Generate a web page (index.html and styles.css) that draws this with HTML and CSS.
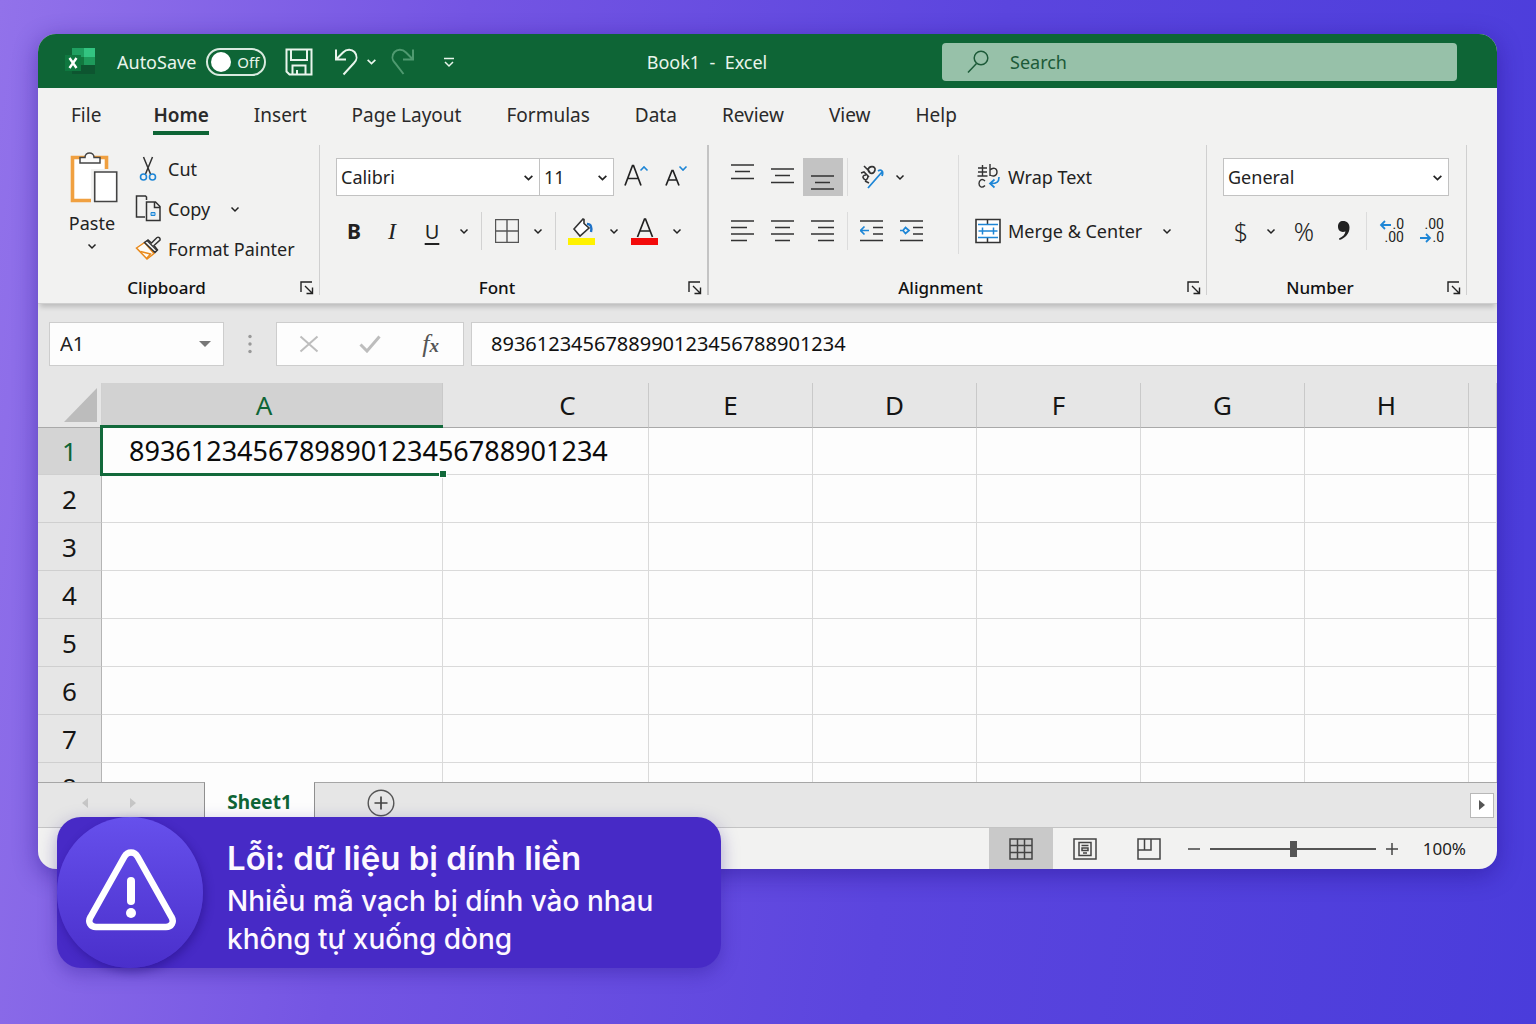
FILE: index.html
```html
<!DOCTYPE html>
<html lang="vi">
<head>
<meta charset="utf-8">
<title>Book1 - Excel</title>
<link rel="stylesheet" href="styles.css">
</head>
<body>
<svg width="0" height="0" class="defs" aria-hidden="true">
  <symbol id="chev" viewBox="0 0 10 10"><path d="M1.500 3.500L5 7l3.500-3.500" fill="none" stroke="currentColor" stroke-width="1.500"/></symbol>
  <symbol id="launch" viewBox="0 0 14 14"><path d="M1 11V1h11M5 5l7 7M12.500 6.500v6h-6" fill="none" stroke="currentColor" stroke-width="1.400"/></symbol>
</svg>
<main class="window">
  <header class="titlebar">
    <div class="quick">
      <svg class="logo" viewBox="0 0 32 30" width="32" height="30"><path d="M8 1h12v9H8z" fill="#1fa061"/><path d="M20 1h11v9H20z" fill="#33c481"/><path d="M8 10h12v8H8z" fill="#12783f"/><path d="M20 10h11v8H20z" fill="#1e9a5b"/><path d="M8 18h23v9H8z" fill="#0d5530"/><path d="M1 8h16v16H1z" fill="#0f7840"/><path d="M5.500 11l7 10M12.500 11l-7 10" stroke="#fff" stroke-width="2.400"/></svg>
      <label class="autosave"><span>AutoSave</span><span class="switch"><input type="checkbox"><span>Off</span></span></label>
      <button class="tb save" aria-label="Save"><svg width="28" height="28" viewBox="0 0 28 28"><path d="M1.500 1.500h25v25h-22l-3-3zM6 1.500v10.500h16V1.500M7.500 26V17.500h13V26M12 26v-4" fill="none" stroke="currentColor" stroke-width="2"/></svg></button>
      <button class="tb undo" aria-label="Undo"><svg width="26" height="28" viewBox="0 0 26 28"><path d="M2 1.500v10h10M2.500 11L9 4.500c4-4 9-3 11.500-.5 3 3.500 2.500 8-.5 11L9.500 26.500" fill="none" stroke="currentColor" stroke-width="2"/></svg></button>
      <button class="tb" aria-label="Undo list"><svg width="11" height="11"><use href="#chev"/></svg></button>
      <button class="tb redo" aria-label="Redo"><svg width="26" height="28" viewBox="0 0 26 28"><path d="M24 1.500v10H14M23.500 11L17 4.500c-4-4-9-3-11.500-.5-3 3.500-2.500 8 .5 11L14.500 26" fill="none" stroke="currentColor" stroke-width="2"/></svg></button>
      <button class="tb more" aria-label="Customize"><svg width="12" height="12" viewBox="0 0 12 12"><path d="M1 2.500h10M2 6l4 4 4-4" fill="none" stroke="currentColor" stroke-width="1.500"/></svg></button>
    </div>
    <h1 class="doc">Book1 &nbsp;- &nbsp;Excel</h1>
    <label class="search"><svg width="24" height="26" viewBox="0 0 24 26"><circle cx="15" cy="9" r="6.800" fill="none" stroke="currentColor" stroke-width="1.500"/><path d="M10.500 14.500L2 23.500" stroke="currentColor" stroke-width="1.500"/></svg><input type="text" placeholder="Search" aria-label="Search"></label>
  </header>

  <nav class="tabs">
    <a href="#" class="file">File</a><a href="#" class="on">Home</a><a href="#">Insert</a><a href="#">Page Layout</a><a href="#">Formulas</a><a href="#">Data</a><a href="#">Review</a><a href="#">View</a><a href="#">Help</a>
  </nav>

  <section class="ribbon">
    <div class="group clipboard">
      <div class="tools">
        <button class="paste"><svg width="52" height="54" viewBox="0 0 52 54"><path d="M6.500 6.500h34v43h-34z" fill="#fff" stroke="#f0a040" stroke-width="3.600"/><path d="M14 12V6.500h5c0-6 9-6 9 0h6V12z" fill="#fafafa" stroke="#444" stroke-width="1.500"/><path d="M25 18h27v36H25z" fill="#f2f2f1"/><path d="M28.700 21h22v29.500h-22z" fill="#fff" stroke="#444" stroke-width="1.600"/></svg><span>Paste</span><svg width="10" height="10"><use href="#chev"/></svg></button>
        <div class="stack">
          <button class="row"><svg width="26" height="28" viewBox="0 0 26 28"><path d="M8.500 2l7 17M17.500 2l-7 17" stroke="#333" stroke-width="1.500"/><circle cx="8.500" cy="22" r="3" fill="none" stroke="#1e86d6" stroke-width="1.600"/><circle cx="17.500" cy="22" r="3" fill="none" stroke="#1e86d6" stroke-width="1.600"/></svg>Cut</button>
          <button class="row"><svg width="26" height="28" viewBox="0 0 26 28"><path d="M10 22H1.500V1h9l1 1v3M11.500 7h9l4.500 4.500V25.500H11.500zM19.500 7v5.500H25" fill="none" stroke="#333" stroke-width="1.500"/><path d="M16 17.500h4v3h-4z" fill="#9fd0f5" stroke="#1e86d6"/></svg>Copy<svg class="drop" width="10" height="10"><use href="#chev"/></svg></button>
          <button class="row"><svg width="26" height="28" viewBox="0 0 26 28"><path d="M9.500 7.500L1.500 13l10.500 11 7-5.500z" fill="#fdfaf4" stroke="#e98a1c" stroke-width="1.500"/><path d="M5.500 16.500l10 2.500-4 4.500" fill="none" stroke="#e98a1c" stroke-width="1.400"/><path d="M9.500 7.500l10.500 10 2.500-2.500-3.500-4.500 6-5.500c.500-2-1.500-3.500-3-2.500L16.500 8 13 5z" fill="#f2f2f1" stroke="#333" stroke-width="1.500"/><path d="M12 5.500l10 10" stroke="#333" stroke-width="1.200"/></svg>Format Painter</button>
        </div>
      </div>
      <footer><h2>Clipboard</h2><button class="launch" aria-label="Clipboard settings"><svg width="14" height="14"><use href="#launch"/></svg></button></footer>
    </div>

    <div class="group font">
      <div class="rows">
        <div class="line">
          <span class="combo face"><select aria-label="Font"><option>Calibri</option></select><svg width="11" height="11"><use href="#chev"/></svg></span>
          <span class="combo size"><select aria-label="Font size"><option>11</option></select><svg width="11" height="11"><use href="#chev"/></svg></span>
          <button class="b w44" aria-label="Increase font size"><svg width="26" height="28" viewBox="0 0 26 28"><path d="M2 22.500L9.500 2.500h1l7.500 20M4.500 15.500h11" fill="none" stroke="#222" stroke-width="1.700"/><path d="M17.500 7.500L21 4l3.500 3.500" fill="none" stroke="#1e86d6" stroke-width="1.600"/></svg></button>
          <button class="b w36" aria-label="Decrease font size"><svg width="26" height="28" viewBox="0 0 26 28"><path d="M3 22.500L9 7.500h1l6 15M5 17h9" fill="none" stroke="#222" stroke-width="1.700"/><path d="M16.500 3.500L20 7l3.500-3.500" fill="none" stroke="#1e86d6" stroke-width="1.600"/></svg></button>
        </div>
        <div class="line">
          <button class="b w36 bold">B</button><button class="b w40 ital">I</button><button class="b w40 under">U</button>
          <button class="b w24" aria-label="Underline styles"><svg width="10" height="10"><use href="#chev"/></svg></button><i class="sep"></i>
          <button class="b w38" aria-label="Borders"><svg width="24" height="24" viewBox="0 0 24 24"><path d="M.5.5h23v23H.5zM12 1v23M1 12h22" fill="none" stroke="#555" stroke-width="1.400"/></svg></button>
          <button class="b w24" aria-label="Border styles"><svg width="10" height="10"><use href="#chev"/></svg></button><i class="sep"></i>
          <button class="b w40" aria-label="Fill color"><svg width="28" height="30" viewBox="0 0 28 30"><path d="M6 13L15 3l1 .5v4l5 4.500-9 8z" fill="#fff" stroke="#333" stroke-width="1.600"/><path d="M19 8c4 0 5 3 4 8" fill="none" stroke="#1e72c8" stroke-width="2.400"/><path d="M0 22h27v7H0z" fill="#fff200"/></svg></button>
          <button class="b w24" aria-label="Fill colors"><svg width="10" height="10"><use href="#chev"/></svg></button>
          <button class="b w40" aria-label="Font color"><svg width="28" height="30" viewBox="0 0 28 30"><path d="M6.500 21L13.500 3h1l7 18M9 15h10" fill="none" stroke="#222" stroke-width="1.700"/><path d="M0 22h27v7H0z" fill="#f30b0b"/></svg></button>
          <button class="b w24" aria-label="Font colors"><svg width="10" height="10"><use href="#chev"/></svg></button>
        </div>
      </div>
      <footer><h2>Font</h2><button class="launch" aria-label="Font settings"><svg width="14" height="14"><use href="#launch"/></svg></button></footer>
    </div>

    <div class="group align">
      <div class="tools">
        <div class="rows">
          <div class="line">
            <button class="b w40" aria-label="Top align"><svg width="24" height="26" viewBox="1 0 24 26"><path d="M1 1h23M5 7.500h15M1 14.500h23" stroke="#333" stroke-width="1.700"/></svg></button>
            <button class="b w40" aria-label="Middle align"><svg width="24" height="26" viewBox="1 0 24 26"><path d="M1 5h23M5 11.500h15M1 18.500h23" stroke="#333" stroke-width="1.700"/></svg></button>
            <button class="b w40 active" aria-label="Bottom align"><svg width="24" height="26" viewBox="1 0 24 26"><path d="M1 12h23M5 18.500h15M1 25h23" stroke="#333" stroke-width="1.700"/></svg></button><i class="sep faint"></i>
            <button class="b w40" aria-label="Orientation"><svg width="28" height="28" viewBox="0 0 28 28"><path d="M3 10l3-1 5 5M8 12c-3 0-4 2-2 4s4 0 4-3M7 18l4 2M6 3l6 6M10 7c1-5 8-4 7 0s-5 5-7 0" fill="none" stroke="#333" stroke-width="1.600"/><path d="M10 25L24 9M20 8c3-2 6 0 4 5" fill="none" stroke="#1e86d6" stroke-width="1.800"/></svg></button>
            <button class="b w16" aria-label="Orientations"><svg width="10" height="10"><use href="#chev"/></svg></button>
          </div>
          <div class="line">
            <button class="b w40" aria-label="Align left"><svg width="24" height="24" viewBox="1 0 24 24"><path d="M1 2h23M1 8.500h16M1 15h23M1 21.500h16" stroke="#333" stroke-width="1.700"/></svg></button>
            <button class="b w40" aria-label="Center"><svg width="24" height="24" viewBox="1 0 24 24"><path d="M1 2h23M5 8.500h15M1 15h23M5 21.500h15" stroke="#333" stroke-width="1.700"/></svg></button>
            <button class="b w40" aria-label="Align right"><svg width="24" height="24" viewBox="1 0 24 24"><path d="M1 2h23M8 8.500h16M1 15h23M8 21.500h16" stroke="#333" stroke-width="1.700"/></svg></button><i class="sep faint"></i>
            <button class="b w40" aria-label="Decrease indent"><svg width="24" height="24" viewBox="1 0 24 24"><path d="M1 2h23M14 8.500h10M14 15h10M1 21.500h23" stroke="#333" stroke-width="1.700"/><path d="M10 11.500H2M5.500 7.500l-4 4 4 4" fill="none" stroke="#1e86d6" stroke-width="1.700"/></svg></button>
            <button class="b w40" aria-label="Increase indent"><svg width="24" height="24" viewBox="1 0 24 24"><path d="M1 2h23M14 8.500h10M14 15h10M1 21.500h23" stroke="#333" stroke-width="1.700"/><path d="M1 11.500h3M6.500 8.500l3.500 3-3.500 3-2.500-3z" fill="none" stroke="#1e86d6" stroke-width="1.700"/></svg></button>
          </div>
        </div>
        <div class="rows text">
          <button class="row"><svg width="26" height="28" viewBox="0 0 26 28"><path d="M3 5h9M3 9h9M2.500 13h10M7.500 2v11M15 1v12M15 7c3-3 7-2 7 2s-4 5-7 3M10 18c-3-3-6-1-6 2.500s3 5 6 2" fill="none" stroke="#333" stroke-width="1.400"/><path d="M24 14c0 5-2 6.500-8 6.500M19.500 16.500l-4.500 4 4.500 4" fill="none" stroke="#1e86d6" stroke-width="1.700"/></svg>Wrap Text</button>
          <button class="row"><svg width="26" height="28" viewBox="0 0 26 28"><path d="M1 2.500h24v23H1z" fill="#fff" stroke="#333" stroke-width="1.600"/><path d="M12.500 2.500v4.500M12.500 21v4.500" stroke="#333" stroke-width="1.500"/><path d="M3 7.500h20M3 20.500h20M3.500 14h7M15.500 14h7M7.500 10.500v7M18.500 10.500v7M10.500 14h5" stroke="#1e86d6" stroke-width="1.500"/></svg>Merge &amp; Center<svg class="drop" width="10" height="10"><use href="#chev"/></svg></button>
        </div>
      </div>
      <footer><h2>Alignment</h2><button class="launch" aria-label="Alignment settings"><svg width="14" height="14"><use href="#launch"/></svg></button></footer>
    </div>

    <div class="group number">
      <div class="rows">
        <div class="line"><span class="combo general"><select aria-label="Number format"><option>General</option></select><svg width="11" height="11"><use href="#chev"/></svg></span></div>
        <div class="line">
          <button class="b w36 sym">$</button><button class="b w24" aria-label="Currencies"><svg width="10" height="10"><use href="#chev"/></svg></button>
          <button class="b w44 sym">%</button>
          <button class="b w36" aria-label="Comma style"><svg width="16" height="22" viewBox="0 0 16 22"><path d="M7 1c4 0 6.500 2.500 6.500 6.500 0 6-4 10.500-10 12.500l-.5-1.500c4-2 6-4 6.500-7C5 13 2 10.500 2 6.500 2 3 4 1 7 1z" fill="#222"/></svg></button><i class="sep faint"></i>
          <button class="b w40 dec"><span><svg width="13" height="12" viewBox="0 0 13 12"><path d="M12 6H2M6 2L2 6l4 4" fill="none" stroke="#1e86d6" stroke-width="1.800"/></svg>.0</span><span>.00</span></button>
          <button class="b w40 dec"><span>.00</span><span><svg width="13" height="12" viewBox="0 0 13 12"><path d="M1 6h10M7 2l4 4-4 4" fill="none" stroke="#1e86d6" stroke-width="1.800"/></svg>.0</span></button>
        </div>
      </div>
      <footer><h2>Number</h2><button class="launch" aria-label="Number settings"><svg width="14" height="14"><use href="#launch"/></svg></button></footer>
    </div>
  </section>

  <section class="formula">
    <label class="namebox"><input type="text" value="A1" aria-label="Name box"><svg width="12" height="6" viewBox="0 0 12 6"><path d="M0 0h12L6 6z" fill="#777"/></svg></label>
    <svg class="dots" width="4" height="20" viewBox="0 0 4 20"><circle cx="2" cy="2.500" r="1.700" fill="#999"/><circle cx="2" cy="10" r="1.700" fill="#999"/><circle cx="2" cy="17.500" r="1.700" fill="#999"/></svg>
    <div class="fx">
      <button aria-label="Cancel"><svg width="20" height="18" viewBox="0 0 20 18"><path d="M1.500 1.500l17 15M18.500 1.500l-17 15" stroke="#bdbdbd" stroke-width="2"/></svg></button>
      <button aria-label="Enter"><svg width="22" height="18" viewBox="0 0 22 18"><path d="M1.500 9.500l6.500 6.500L20.500 1.500" fill="none" stroke="#bdbdbd" stroke-width="3"/></svg></button>
      <button class="fn">f<small>x</small></button>
    </div>
    <input class="entry" type="text" value="8936123456788990123456788901234" aria-label="Formula bar">
  </section>

  <section class="sheet">
    <table>
      <colgroup><col class="c0"><col class="ca"><col class="cb"><col class="c1"><col class="c1"><col class="c1"><col class="c1"><col class="c1"><col></colgroup>
      <thead><tr><th class="corner"><svg width="34" height="34" viewBox="0 0 34 34"><path d="M33 0v34H0z" fill="#bcbcbc"/></svg></th><th class="sel">A</th><th class="off">C</th><th>E</th><th>D</th><th>F</th><th>G</th><th>H</th><th></th></tr></thead>
      <tbody>
        <tr><th class="sel">1</th><td class="cur"><span>8936123456789890123456788901234</span></td><td></td><td></td><td></td><td></td><td></td><td></td><td></td></tr>
        <tr><th>2</th><td></td><td></td><td></td><td></td><td></td><td></td><td></td><td></td></tr>
        <tr><th>3</th><td></td><td></td><td></td><td></td><td></td><td></td><td></td><td></td></tr>
        <tr><th>4</th><td></td><td></td><td></td><td></td><td></td><td></td><td></td><td></td></tr>
        <tr><th>5</th><td></td><td></td><td></td><td></td><td></td><td></td><td></td><td></td></tr>
        <tr><th>6</th><td></td><td></td><td></td><td></td><td></td><td></td><td></td><td></td></tr>
        <tr><th>7</th><td></td><td></td><td></td><td></td><td></td><td></td><td></td><td></td></tr>
        <tr><th>8</th><td></td><td></td><td></td><td></td><td></td><td></td><td></td><td></td></tr>
      </tbody>
    </table>
  </section>

  <section class="sheets">
    <div class="arrows"><button aria-label="Previous sheet"><svg width="6" height="10" viewBox="0 0 6 10"><path d="M6 0v10L0 5z" fill="#c6c6c6"/></svg></button><button aria-label="Next sheet"><svg width="6" height="10" viewBox="0 0 6 10"><path d="M0 0v10l6-5z" fill="#c6c6c6"/></svg></button></div>
    <a href="#" class="tab">Sheet1</a>
    <div class="rest"><button class="add" aria-label="New sheet"><svg width="28" height="28" viewBox="0 0 28 28"><circle cx="14" cy="14" r="12.800" fill="none" stroke="#555" stroke-width="1.400"/><path d="M14 7.500v13M7.500 14h13" stroke="#444" stroke-width="1.700"/></svg></button><button class="scroll" aria-label="Scroll right"><svg width="6" height="10" viewBox="0 0 6 10"><path d="M0 0v10l6-5z" fill="#555"/></svg></button></div>
  </section>

  <footer class="status">
    <button class="view on" aria-label="Normal"><svg width="24" height="22" viewBox="0 0 24 22"><path d="M1 1h22v20H1zM8.500 1v20M15.500 1v20M1 7.500h22M1 14.500h22" fill="none" stroke="#444" stroke-width="1.500"/></svg></button>
    <button class="view" aria-label="Page layout"><svg width="24" height="22" viewBox="0 0 24 22"><path d="M1 1h22v20H1zM6 4.500h12v13H6zM8.500 7.500h7M9 10h6v2.500H9zM10 15h4" fill="none" stroke="#444" stroke-width="1.500"/></svg></button>
    <button class="view" aria-label="Page break"><svg width="24" height="22" viewBox="0 0 24 22"><path d="M1 1h22v20H1zM1 12h13V1M7.500 1v11" fill="none" stroke="#444" stroke-width="1.500"/></svg></button>
    <button class="zoom" aria-label="Zoom out"><svg width="14" height="14" viewBox="0 0 14 14"><path d="M1 7h12" stroke="#444" stroke-width="1.500"/></svg></button>
    <input class="slider" type="range" min="0" max="200" value="100" aria-label="Zoom">
    <button class="zoom" aria-label="Zoom in"><svg width="14" height="14" viewBox="0 0 14 14"><path d="M1 7h12M7 1v12" stroke="#444" stroke-width="1.500"/></svg></button>
    <output>100%</output>
  </footer>
</main>

<aside class="callout" role="alert">
  <div class="badge"><svg width="92" height="84" viewBox="0 0 92 84"><path d="M39.500 8.500L5.500 69c-3 5 0 10 5.500 10h70c5.500 0 8.500-5 5.500-10l-34-60.500c-3-5.500-10-5.500-13 0z" fill="none" stroke="#fff" stroke-width="6.500"/><path d="M46 33v20" stroke="#fff" stroke-width="8" stroke-linecap="round"/><circle cx="46" cy="65" r="5" fill="#fff"/></svg></div>
  <div class="msg"><strong>Lỗi: dữ liệu bị dính liền</strong><p>Nhiều mã vạch bị dính vào nhau<br>không tự xuống dòng</p></div>
</aside>
</body>
</html>
```

FILE: styles.css
```css
* { box-sizing: border-box; }
body {
  margin: 0;
  height: 100vh;
  padding: 34px 39px 155px 38px;
  display: flex;
  position: relative;
  background: linear-gradient(98deg, #9272ea 0%, #7455e3 28%, #5b45de 60%, #4a3cdb 100%);
  font-family: "Noto Sans", "Open Sans", sans-serif;
  font-size: 18px;
  color: #222;
}
.defs { position: absolute; }
button, input, select { font: inherit; color: inherit; border: 0; background: none; padding: 0; margin: 0; min-width: 0; outline: 0; }
button { display: inline-flex; align-items: center; justify-content: center; }
svg { display: block; flex: none; }
h1, h2, p { margin: 0; font-weight: 400; font-size: inherit; }

.window {
  flex: 1;
  min-width: 0;
  display: flex;
  flex-direction: column;
  border-radius: 18px;
  overflow: hidden;
  background: #f2f2f1;
  box-shadow: 0 6px 24px rgba(30, 10, 130, .45);
}

/* title bar */
.titlebar { display: flex; align-items: center; height: 54px; padding-top: 1px; background: #0e6536; color: #e9f5ec; flex: none; }
.quick { width: 434px; padding-left: 26px; display: flex; align-items: center; }
.autosave { display: flex; align-items: center; gap: 10px; margin-left: 21px; }
.switch { display: flex; align-items: center; gap: 6px; width: 60px; height: 28px; padding: 0 3px; border: 2px solid #d9eadf; border-radius: 14px; font-size: 15px; }
.switch input { appearance: none; width: 20px; height: 20px; border-radius: 50%; background: #fff; }
.save { margin-left: 19px; }
.undo { margin: 0 6px 0 21px; }
.redo { margin: 0 28px 0 12px; color: #4f9a70; }
.doc { flex: 1; text-align: center; }
.search { display: flex; align-items: center; width: 515px; height: 38px; margin-right: 40px; padding-left: 24px; gap: 20px; border-radius: 4px; background: #97c1a9; color: #1c5a38; }
.search input { flex: 1; }
.search input::placeholder { color: #1c5a38; opacity: 1; }

/* ribbon tabs */
.tabs { display: flex; gap: 45px; height: 57px; padding: 12px 33px 0; flex: none; font-size: 19px; }
.tabs a { color: #2a2a2a; text-decoration: none; height: 35px; line-height: 30px; white-space: nowrap; }
.tabs .file { padding-right: 7px; }
.tabs .on { font-weight: 600; border-bottom: 4px solid #0e6536; }

/* ribbon */
.ribbon { display: flex; height: 159px; padding-bottom: 8px; flex: none; border-bottom: 1px solid #cfcfcf; box-shadow: 0 5px 5px -2px rgba(0, 0, 0, .18); z-index: 1; }
.group { display: flex; flex-direction: column; justify-content: space-between; border-right: 1px solid #d0d0d0; }
.group footer { position: relative; display: flex; justify-content: center; height: 18px; line-height: 22px; font-size: 17px; font-weight: 500; }
.group h2 { color: #111; font-weight: 500; }
.launch { position: absolute; right: 5px; top: 4px; }
.tools { display: flex; }
.clipboard { width: 282px; }
.clipboard footer { padding-right: 24px; }
.font { width: 389px; border-right: 2px solid #c4c4c4; }
.font footer { padding-right: 33px; }
.align { width: 498px; }
.align footer { padding-right: 34px; }
.number { width: 260px; }
.number footer { padding-right: 33px; }
.paste { flex-direction: column; width: 54px; margin: 6px 16px 0 27px; gap: 6px; justify-content: flex-start; }
.stack { display: flex; flex-direction: column; padding-top: 4px; }
.row { height: 40px; gap: 7px; justify-content: flex-start; white-space: nowrap; }
.drop { margin-left: 13px; }
.rows { display: flex; flex-direction: column; gap: 16px; padding: 13px 0 0 16px; }
.line { display: flex; align-items: center; height: 38px; }
.align .rows { padding-left: 14px; }
.align .rows.text { height: 99px; margin: 10px 0 0 26px; padding: 3px 0 0 16px; border-left: 1px solid #dcdcdc; }
.rows.text .row { height: 38px; }
.b { height: 38px; }
.w16 { width: 16px; } .w24 { width: 23px; } .w36 { width: 36px; } .w38 { width: 38px; } .w40 { width: 40px; } .w44 { width: 44px; }
.sep { width: 1px; height: 38px; margin: 0 6px; background: #d2d2d2; }
.faint { margin: 0 4px; background: #dcdcdc; }
.active { background: #c3c3c3; }
.bold { font-weight: 700; font-size: 21px; }
.ital { font: italic 24px "Liberation Serif", serif; }
.under { font-size: 20px; text-decoration: underline; text-underline-offset: 4px; text-decoration-thickness: 2px; }
.sym { font-size: 25px; font-weight: 300; }
.dec { flex-direction: column; align-items: flex-end; padding-right: 7px; font: 14px/13px Roboto, sans-serif; }
.dec span { display: flex; align-items: center; }
.combo { display: grid; align-items: center; height: 38px; border: 1px solid #c2c2c2; background: #fff; }
.combo > * { grid-area: 1 / 1; }
.combo select { appearance: none; width: 100%; height: 36px; padding-left: 4px; }
.combo svg { justify-self: end; margin-right: 5px; pointer-events: none; }
.face { width: 204px; }
.size { width: 74px; border-left: 0; }
.general { width: 226px; }

/* formula bar */
.formula { display: flex; align-items: center; height: 79px; padding: 0 0 0 11px; background: #e6e6e6; flex: none; }
.namebox, .fx, .entry { height: 44px; background: #fdfdfd; border: 1px solid #cdcdcd; }
.namebox { display: flex; align-items: center; width: 175px; padding: 0 12px 0 10px; font-size: 20px; }
.namebox input { flex: 1; }
.dots { margin: 0 24px; }
.fx { display: flex; align-items: center; width: 188px; margin-right: 7px; padding: 0 2px; color: #555; }
.fx button { flex: 1; }
.fn { font: italic 26px "Liberation Serif", serif; align-items: baseline; }
.fn small { font-size: 19px; font-weight: 700; }
.entry { flex: 1; padding-left: 19px; font-size: 20px; color: #111; border-right: 0; }

/* grid */
.sheet { flex: 1; min-height: 0; overflow: hidden; background: #fdfdfd; }
table { width: 100%; table-layout: fixed; border-collapse: separate; border-spacing: 0; }
.c0 { width: 64px; } .ca { width: 341px; } .cb { width: 206px; } .c1 { width: 164px; }
th { font-weight: 400; font-size: 26px; color: #151515; background: #e6e6e6; padding: 0; line-height: 30px; }
thead th { height: 45px; border-right: 1px solid #c9c9c9; border-bottom: 1px solid #a9a9a9; }
thead .corner { border-right-color: #d0d0d0; }
.corner svg { margin: 0 0 0 26px; }
thead .off { padding-left: 44px; }
thead .sel { background: #d2d2d2; color: #0e6536; border-bottom-color: #0e6536; padding-right: 16px; }
tbody th { height: 48px; border-right: 1px solid #b4b4b4; border-bottom: 1px solid #cfcfcf; }
tbody .sel { background: #d4d4d4; color: #0e6536; }
td { padding: 0; border-right: 1px solid #dadada; border-bottom: 1px solid #dadada; }
tbody tr:first-child > * { height: 47px; }
.cur { position: relative; border-right: 0; font-size: 27px; line-height: 30px; color: #0b0b0b; white-space: nowrap; padding-left: 27px; }
.cur::before { content: ""; position: absolute; inset: -3px 0 -2px -2px; border: 3px solid #12693b; border-right: 0; }
.cur::after { content: ""; position: absolute; right: -4px; bottom: -4px; width: 6px; height: 6px; background: #12693b; border: 1px solid #fff; box-sizing: content-box; }

/* sheet tabs */
.sheets { display: flex; height: 46px; flex: none; background: #fdfdfd; }
.arrows, .rest { display: flex; align-items: center; background: #e6e6e6; border-top: 1px solid #a6a6a6; border-bottom: 1px solid #c4c4c4; }
.arrows { width: 167px; border-right: 1px solid #8f8f8f; padding: 0 68px 4px 44px; justify-content: space-between; }
.tab { width: 109px; text-align: center; line-height: 40px; font-size: 19px; font-weight: 700; color: #0e6536; text-decoration: none; }
.rest { flex: 1; border-left: 1px solid #8f8f8f; padding: 0 3px 0 52px; justify-content: space-between; }
.add { padding-bottom: 4px; }
.scroll { width: 24px; height: 25px; background: #fff; border: 1px solid #b8b8b8; }

/* status bar */
.status { display: flex; justify-content: flex-end; align-items: center; height: 41px; flex: none; padding-right: 31px; }
.view { width: 64px; height: 41px; }
.view.on { background: #c9c9c9; }
.zoom { width: 14px; margin: 0 9px; }
.view + .zoom { margin-left: 6px; }
.slider { appearance: none; width: 166px; height: 16px; background: linear-gradient(#555, #555) center / 100% 2px no-repeat; }
.slider::-webkit-slider-thumb { appearance: none; width: 7px; height: 16px; background: #555; }
output { width: 44px; margin-left: 14px; text-align: right; font-size: 17px; white-space: nowrap; }

/* callout */
.callout { position: absolute; left: 57px; bottom: 56px; display: flex; align-items: center; width: 664px; height: 151px; gap: 24px; border-radius: 24px; background: #472ac6; color: #fdf8ff; box-shadow: 0 6px 18px rgba(40, 20, 140, .35); font-family: Inter, "Noto Sans", sans-serif; }
.badge { width: 146px; height: 151px; padding: 0 0 6px 2px; border-radius: 50%; background: linear-gradient(#6650ec, #4a2fcb); display: flex; align-items: center; justify-content: center; box-shadow: 2px 4px 10px rgba(30, 10, 120, .45); }
.msg { padding-top: 6px; }
.msg strong { display: block; font-size: 33px; line-height: 48px; font-weight: 600; }
.msg p { font-size: 28px; line-height: 38px; font-weight: 500; }
```
